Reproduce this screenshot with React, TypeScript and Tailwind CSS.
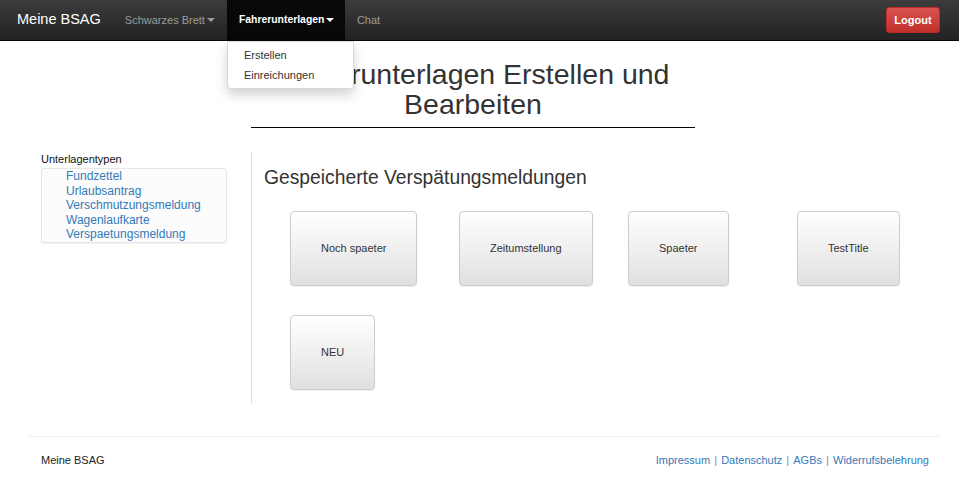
import { useState } from 'react'

const typen = ['Fundzettel', 'Urlaubsantrag', 'Verschmutzungsmeldung', 'Wagenlaufkarte', 'Verspaetungsmeldung']
const meldungen = ['Noch spaeter', 'Zeitumstellung', 'Spaeter', 'TestTitle', 'NEU']
const footerLinks = ['Impressum', 'Datenschutz', 'AGBs', 'Widerrufsbelehrung']

function Caret({ className }: { className: string }) {
  return (
    <span
      className={`ml-[2px] inline-block h-0 w-0 border-x-[4px] border-t-[4px] border-x-transparent align-middle ${className}`}
    />
  )
}

export default function App() {
  const [open] = useState(true)

  return (
    <div className="min-h-[500px] bg-white text-[11px] text-[#333] font-['Liberation_Sans',Arial,sans-serif]">
      {/* Navbar */}
      <nav className="relative z-10 flex h-[41px] items-stretch border-b border-[#080808] bg-gradient-to-b from-[#3c3c3c] to-[#222] pl-[17px] pr-[19px]">
        <a className="flex items-center text-[14.5px] text-white">Meine BSAG</a>
        <ul className="ml-[12px] flex items-stretch">
          <li className="flex items-center px-[12px] text-[#9d9d9d]">
            Schwarzes Brett
            <Caret className="border-t-[#9d9d9d]" />
          </li>
          <li className="relative flex w-[118px] items-center bg-[#080808] px-[12px] text-[10.4px] font-bold text-white">
            Fahrerunterlagen
            <Caret className="border-t-white" />
            {open && (
              <div className="absolute left-0 top-[41px] w-[127px] rounded-b-[4px] border border-black/15 bg-white py-[3px] text-[11px] font-normal text-[#333] shadow-[0_6px_12px_rgba(0,0,0,0.175)]">
                <div className="px-[16px] leading-[20px]">Erstellen</div>
                <div className="px-[16px] leading-[20px]">Einreichungen</div>
              </div>
            )}
          </li>
          <li className="flex items-center px-[12px] text-[#9d9d9d]">Chat</li>
        </ul>
        <div className="ml-auto flex items-center">
          <button className="h-[26px] w-[54px] rounded-[3px] border border-[#b92c28] bg-gradient-to-b from-[#d9534f] to-[#c12e2a] text-[11px] font-bold text-white">
            Logout
          </button>
        </div>
      </nav>

      {/* Title */}
      <div className="ml-[251px] mt-[18px] w-[444px] border-b border-black pb-[8px] text-center text-[28.5px] leading-[30px] text-[#333]">
        Fahrerunterlagen Erstellen und Bearbeiten
      </div>

      {/* Body */}
      <div className="mt-[24px] flex pl-[29px]">
        <aside className="ml-[12px] w-[186px] shrink-0">
          <div className="leading-[15px] text-[#111]">Unterlagentypen</div>
          <ul className="mt-[1px] rounded-[3px] border border-[#e6e6e6] bg-[#fcfcfc] shadow-[0_1px_2px_rgba(0,0,0,0.06)]">
            {typen.map((t) => (
              <li key={t} className="pl-[24px] text-[12px] leading-[14.6px] text-[#337ab7]">
                {t}
              </li>
            ))}
          </ul>
        </aside>

        <main className="ml-[24px] h-[251px] shrink-0 border-l border-[#ddd] pl-[12px] pt-[14px]">
          <h2 className="text-[19.3px] leading-[24px] text-[#333]">Gespeicherte Verspätungsmeldungen</h2>
          <div className="mt-[21px] grid grid-cols-[repeat(4,169px)] gap-y-[29px]">
            {meldungen.map((m) => (
              <div key={m} className="pl-[26px]">
                <button className="h-[75px] rounded-[4px] border border-[#ccc] bg-gradient-to-b from-white to-[#e0e0e0] px-[30px] text-[11px] text-[#333] shadow-[0_1px_1px_rgba(0,0,0,0.06)]">
                  {m}
                </button>
              </div>
            ))}
          </div>
        </main>
      </div>

      {/* Footer */}
      <footer className="ml-[29px] mr-[19px] mt-[33px] border-t border-[#eee] pl-[12px] pr-[11px] pt-[16px]">
        <div className="flex justify-between leading-[15px]">
          <span className="text-[#222]">Meine BSAG</span>
          <span className="text-[#337ab7]">
            {footerLinks.map((l, i) => (
              <span key={l}>
                {i > 0 && <span className="mx-[1px] text-[#6b8fb5]"> | </span>}
                {l}
              </span>
            ))}
          </span>
        </div>
      </footer>
    </div>
  )
}
